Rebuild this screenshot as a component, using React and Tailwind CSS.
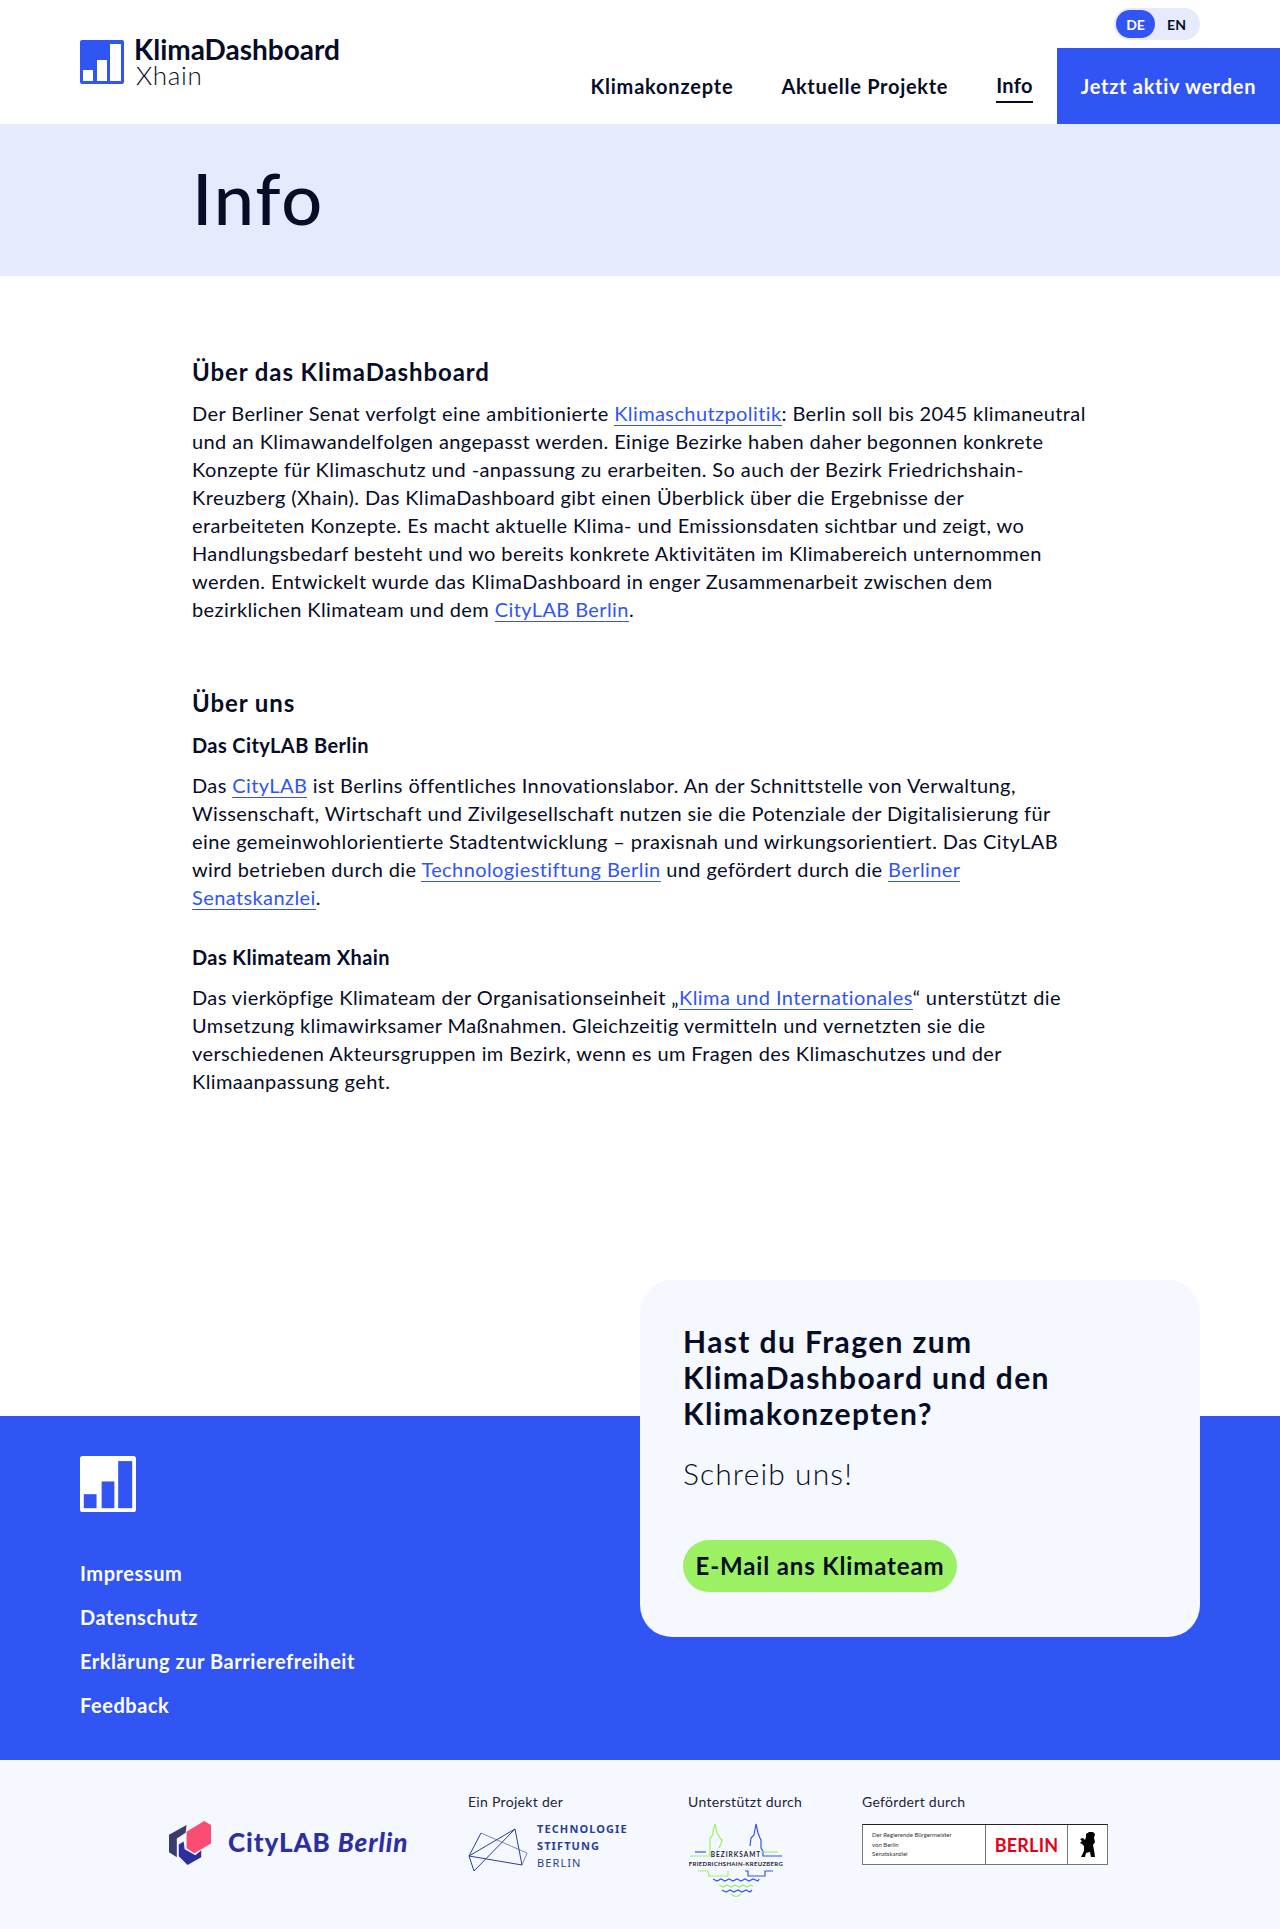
import React from 'react';

const LogoMark = ({ className, bg, bar }) => (
  <svg viewBox="0 0 44 44" className={className}>
    <rect width="44" height="44" rx="2" fill={bg} />
    <rect x="3" y="30" width="10" height="11" fill={bar} />
    <rect x="17" y="20" width="10" height="21" fill={bar} />
    <rect x="30" y="4" width="11" height="37" fill={bar} />
  </svg>
);

const CityLabMark = () => (
  <svg viewBox="9 5 43 47" className="w-[42px] h-[48px]">
    <path d="M27 10 L9 20 L9 38 L17 43 L17 24 L26 18 Z" fill="#3b3c6e" />
    <path d="M24 27 L19 30 L19 42 L28 51 L42 43 L42 36 L36 41 L25 35 Z" fill="#2e2f9f" />
    <path d="M27 17 L45 6 L52 10 L52 29 L35 39 L27 34 Z" fill="#fb4d73" />
  </svg>
);

const TsbMark = () => (
  <svg viewBox="6 8 60 44" className="w-[60px] h-[44px]" fill="none" stroke="#2a3f94" strokeWidth="1">
    <path d="M19 13 L7 36 L12 51 L53 9 L60 45 L7 36 L53 9" />
    <path d="M60 45 L65 33 L19 13" strokeWidth="0.6" />
  </svg>
);

const BezirksamtMark = () => (
  <div className="relative w-[96px] h-[74px]">
    <svg viewBox="0 0 96 74" className="w-[96px] h-[74px]" fill="none" strokeWidth="1.2">
      <path d="M2 33 H22 V15 L25 12 V8 L27 1 L29 10 L32 15 L34 17 L33 21 L31 25" stroke="#9bf163" />
      <path d="M7 29 H18" stroke="#3155f4" />
      <path d="M62 23 L63 15 L66 12 L68 1 L70 10 L72 15 L73 17 V25 L75 28 V33 H94" stroke="#3155f4" />
      <path d="M73 29 H90" stroke="#9bf163" />
      <path d="M10 48 H20 L21 53 H40 V48" stroke="#9bf163" />
      <path d="M57 48 H60 V53 H77 V48 H85" stroke="#3155f4" />
      <path d="M25 56 L29 58 L33 56 L37 58 L41 56 L45 58 L49 56 L53 58 L57 56 L61 58 L65 56 L70 58 L71 56" stroke="#3155f4" />
      <path d="M31 62 L35 64 L39 62 L43 64 L47 62 L51 64 L55 62 L59 64 L63 62 L65 63" stroke="#9bf163" />
      <path d="M34 67 L38 69 L42 67 L46 69 L50 67 L54 69 L58 67 L62 69 L64 67" stroke="#3155f4" />
      <path d="M43 71 L48 74 L53 71" stroke="#9bf163" />
    </svg>
    <p className="absolute left-0 right-0 top-[27px] text-center text-[6.5px] leading-[9px] font-bold tracking-[1px] text-[#1e2238]">BEZIRKSAMT</p>
    <p className="absolute left-0 right-0 top-[36px] text-center text-[6px] leading-[9px] font-bold text-[#1e2238] whitespace-nowrap">FRIEDRICHSHAIN-KREUZBERG</p>
  </div>
);

const Bear = () => (
  <svg viewBox="0 0 15 26" className="w-[15px] h-[26px]" fill="#000">
    <path d="M6 2 L9 0 L13 0 L15 2 L14 6 L15 10 L13 13 L14 18 L15 25 L11 25 L10 20 L6 21 L5 25 L1 25 L4 19 L4 14 L2 12 L0 11 L2 9 L0 7 L3 6 L5 8 L6 5 Z" />
  </svg>
);

const Link = ({ children }) => (
  <a className="text-[#3155f4] border-b border-[#3155f4]">{children}</a>
);

const footerLinks = ['Impressum', 'Datenschutz', 'Erklärung zur Barrierefreiheit', 'Feedback'];

export default function App() {
  return (
    <div className="font-['Lato',sans-serif] text-[#070d26] bg-white min-h-[1929px]">
      {/* Header */}
      <header className="relative h-[124px] flex justify-between">
        <div className="flex gap-[10px] pl-[80px] pt-[40px]">
          <LogoMark className="w-[44px] h-[44px]" bg="#3155f4" bar="#fff" />
          <div className="-mt-[4px]">
            <p className="text-[28px] leading-[26px] font-bold">KlimaDashboard</p>
            <p className="text-[26px] leading-[26px] font-light tracking-[0.7px] pl-[2px]">Xhain</p>
          </div>
        </div>
        <div className="absolute right-[80px] top-[8px] w-[86px] h-[32px] bg-[#e5eafd] rounded-full flex items-center p-[2px] text-[14px] font-bold">
          <span className="w-[39px] h-[28px] bg-[#3155f4] text-white rounded-full flex items-center justify-center">DE</span>
          <span className="flex-1 text-center">EN</span>
        </div>
        <nav className="flex items-end text-[20px] font-bold">
          <a className="h-[76px] flex items-center mr-[48px] tracking-[0.8px]">Klimakonzepte</a>
          <a className="h-[76px] flex items-center mr-[48px] tracking-[0.7px]">Aktuelle Projekte</a>
          <a className="h-[76px] flex items-center mr-[24px] tracking-[0.4px]">
            <span className="border-b-2 border-[#070d26] pb-[1px]">Info</span>
          </a>
          <a className="h-[76px] w-[223px] flex items-center justify-center bg-[#3155f4] text-white tracking-[0.7px]">Jetzt aktiv werden</a>
        </nav>
      </header>

      {/* Hero */}
      <section className="h-[152px] bg-[#e5eafd] flex items-center pb-[7px]">
        <h1 className="w-[896px] mx-auto text-[72px] leading-[80px] font-medium tracking-[1.8px]">Info</h1>
      </section>

      {/* Content */}
      <main className="w-[896px] mx-auto pt-[80px] h-[1140px] text-[20px] leading-[28px] tracking-[0.4px]">
        <h2 className="text-[24px] leading-[32px] font-bold tracking-[0.9px] mb-[11px]">Über das KlimaDashboard</h2>
        <p>
          Der Berliner Senat verfolgt eine ambitionierte <Link>Klimaschutzpolitik</Link>: Berlin soll bis 2045 klimaneutral<br />
          und an Klimawandelfolgen angepasst werden. Einige Bezirke haben daher begonnen konkrete<br />
          Konzepte für Klimaschutz und -anpassung zu erarbeiten. So auch der Bezirk Friedrichshain-<br />
          Kreuzberg (Xhain). Das KlimaDashboard gibt einen Überblick über die Ergebnisse der<br />
          erarbeiteten Konzepte. Es macht aktuelle Klima- und Emissionsdaten sichtbar und zeigt, wo<br />
          Handlungsbedarf besteht und wo bereits konkrete Aktivitäten im Klimabereich unternommen<br />
          werden. Entwickelt wurde das KlimaDashboard in enger Zusammenarbeit zwischen dem<br />
          bezirklichen Klimateam und dem <Link>CityLAB Berlin</Link>.
        </p>

        <h2 className="text-[24px] leading-[32px] font-bold tracking-[0.9px] mt-[64px] mb-[12px]">Über uns</h2>
        <h3 className="font-bold mb-[12px]">Das CityLAB Berlin</h3>
        <p>
          Das <Link>CityLAB</Link> ist Berlins öffentliches Innovationslabor. An der Schnittstelle von Verwaltung,<br />
          Wissenschaft, Wirtschaft und Zivilgesellschaft nutzen sie die Potenziale der Digitalisierung für<br />
          eine gemeinwohlorientierte Stadtentwicklung – praxisnah und wirkungsorientiert. Das CityLAB<br />
          wird betrieben durch die <Link>Technologiestiftung Berlin</Link> und gefördert durch die <Link>Berliner</Link><br />
          <Link>Senatskanzlei</Link>.
        </p>
        <h3 className="font-bold mt-[32px] mb-[12px]">Das Klimateam Xhain</h3>
        <p>
          Das vierköpfige Klimateam der Organisationseinheit „<Link>Klima und Internationales</Link>“ unterstützt die<br />
          Umsetzung klimawirksamer Maßnahmen. Gleichzeitig vermitteln und vernetzten sie die<br />
          verschiedenen Akteursgruppen im Bezirk, wenn es um Fragen des Klimaschutzes und der<br />
          Klimaanpassung geht.
        </p>
      </main>

      {/* Footer */}
      <footer className="relative h-[344px] bg-[#3155f4] pl-[80px] pt-[40px] text-white">
        <LogoMark className="w-[56px] h-[56px]" bg="#fff" bar="#3155f4" />
        <ul className="mt-[39px] text-[20px] leading-[44px] font-bold tracking-[0.55px]">
          {footerLinks.map((label) => (
            <li key={label}>{label}</li>
          ))}
        </ul>
        <div className="absolute left-[640px] top-[-136px] w-[560px] h-[357px] bg-[#f5f8ff] rounded-[32px] px-[43px] pt-[43px] text-[#070d26]">
          <h2 className="text-[30px] leading-[36px] font-bold w-[440px] tracking-[1.4px]">Hast du Fragen zum<br />KlimaDashboard und den<br />Klimakonzepten?</h2>
          <p className="text-[30px] leading-[36px] font-light mt-[24px] tracking-[1.1px]">Schreib uns!</p>
          <a className="inline-flex items-center justify-center mt-[49px] w-[274px] h-[52px] rounded-full bg-[#9bf163] text-[24px] font-bold tracking-[0.85px]">E-Mail ans Klimateam</a>
        </div>
      </footer>

      {/* Logos */}
      <section className="h-[169px] bg-[#f5f8ff] flex items-start pt-[32px] pl-[169px] text-[14px] leading-[20px] tracking-[0.3px] text-[#1e2238]">
        <div className="w-[299px] pt-[27px] flex items-center gap-[17px]">
          <CityLabMark />
          <p className="text-[26px] font-black text-[#2e2f9f] tracking-[0.9px] -mt-[2px]">CityLAB <em>Berlin</em></p>
        </div>
        <div className="w-[220px]">
          <p>Ein Projekt der</p>
          <div className="flex gap-[9px] mt-[16px]">
            <TsbMark />
            <div className="text-[11px] leading-[17px] tracking-[1.1px] text-[#2a3f94] font-bold font-['Noto_Sans',sans-serif] -mt-[8px]">
              <p>TECHNOLOGIE</p>
              <p>STIFTUNG</p>
              <p className="font-normal">BERLIN</p>
            </div>
          </div>
        </div>
        <div className="w-[174px]">
          <p>Unterstützt durch</p>
          <div className="mt-[11px]"><BezirksamtMark /></div>
        </div>
        <div>
          <p>Gefördert durch</p>
          <div className="mt-[12px] w-[246px] h-[41px] flex border border-[#777] border-t-[#222] bg-white tracking-normal">
            <div className="w-[123px] border-r border-[#777] pl-[9px] pt-[5px] text-[6px] leading-[9.5px] text-[#333]">
              <p>Der Regierende Bürgermeister</p>
              <p>von Berlin</p>
              <p>Senatskanzlei</p>
            </div>
            <div className="w-[82px] border-r border-[#777] flex items-center justify-center text-[#e2001a] text-[18px] font-bold tracking-[0.2px]">BERLIN</div>
            <div className="flex-1 flex items-center justify-center"><Bear /></div>
          </div>
        </div>
      </section>
    </div>
  );
}
